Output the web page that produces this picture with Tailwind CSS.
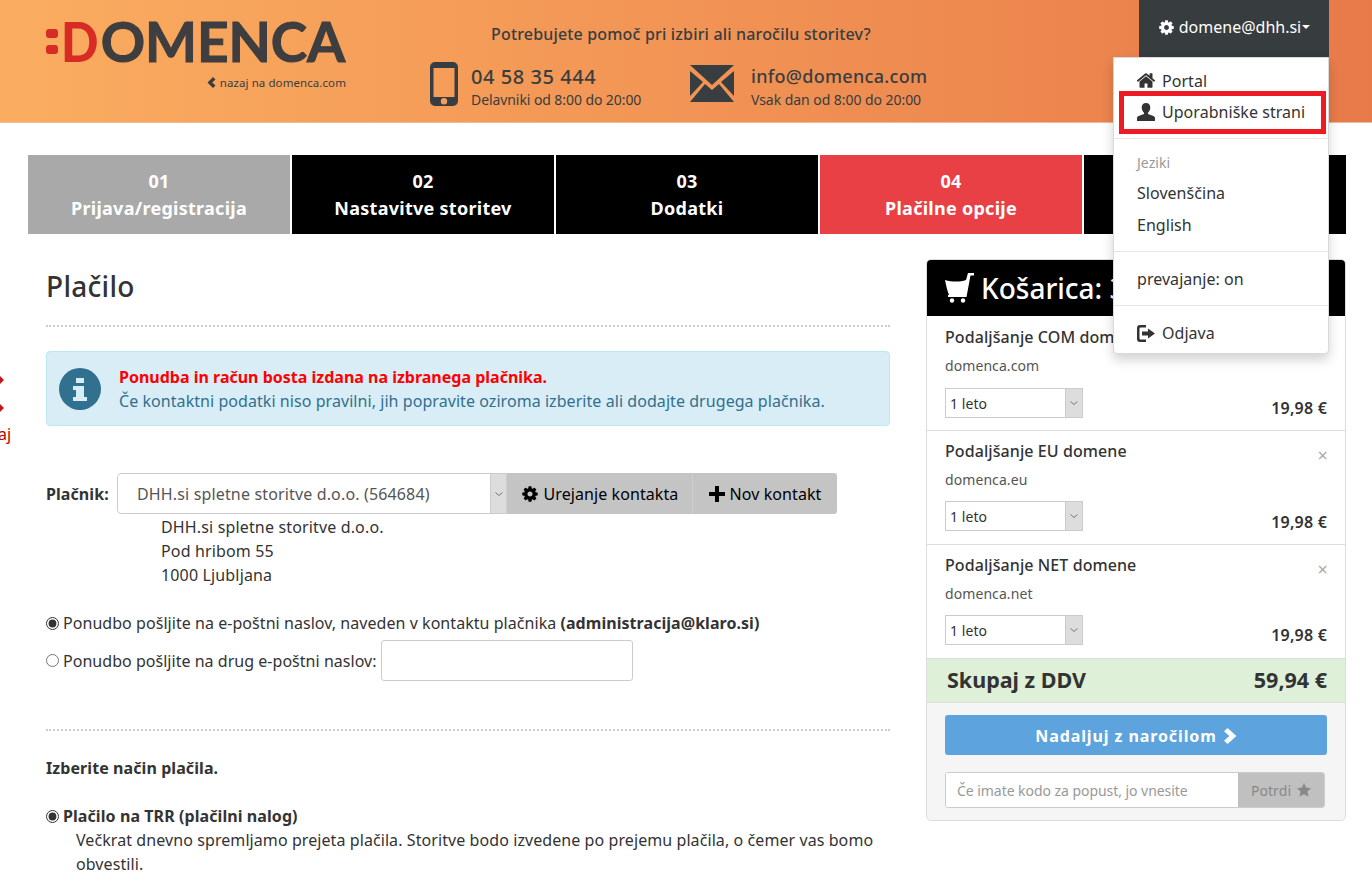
<!DOCTYPE html>
<html lang="sl">
<head>
  <meta charset="UTF-8" />
  <title>Domenca - Plačilo</title>
  <script src="https://cdn.jsdelivr.net/npm/@tailwindcss/browser@4"></script>
</head>
<body class="relative h-[884px] overflow-hidden bg-white font-['Noto_Sans',sans-serif] text-[16px] tracking-[0.08px] text-[#333]">

  <!-- header -->
  <header class="flex h-[123px] border-b border-[#e9bd9b] bg-gradient-to-r from-[#faad60] to-[#e87a49] text-[#373d40]">
    <div class="w-[367px] shrink-0 pl-[46px] pt-[14px]">
      <div class="flex h-[54px] items-center">
        <div class="flex w-[12px] flex-col gap-[7px]">
          <span class="h-[9px] w-[12px] rounded-[3px] bg-[#d92b26]"></span>
          <span class="h-[9px] w-[12px] rounded-[3px] bg-[#d92b26]"></span>
        </div>
        <span class="ml-[3px] -mr-[4px] inline-block origin-left scale-x-[0.88] font-['Lato',sans-serif] text-[56px] leading-none font-black text-[#d92b26]">D</span>
        <span class="ml-[1px] font-['Lato',sans-serif] text-[55px] leading-none font-bold tracking-[-0.1px] text-[#3e3d40] [-webkit-text-stroke:1px_#3e3d40]">OMENCA</span>
      </div>
      <div class="mt-[6px] flex w-[300px] items-center justify-end gap-[4px] text-[11.5px]">
        <svg class="h-[11px] w-[9px]" viewBox="0 0 9 11"><path d="M6 0l2.500 2.500L5.200 5.500l3.300 3L6 11 .5 5.500z" fill="#373d40"/></svg>
        <span>nazaj na domenca.com</span>
      </div>
    </div>

    <div class="w-[620px] shrink-0 pt-[23px]">
      <p class="pl-[124px] text-[16px] leading-[22px] font-medium tracking-[0.17px]">Potrebujete pomoč pri izbiri ali naročilu storitev?</p>
      <div class="mt-[16px] flex">
        <div class="flex w-[323px] items-start gap-[13px] pl-[63px]">
          <svg class="mt-[1px] h-[44px] w-[28px] shrink-0" viewBox="0 0 28 44"><path fill-rule="evenodd" d="M5 0h18a5 5 0 0 1 5 5v34a5 5 0 0 1-5 5H5a5 5 0 0 1-5-5V5a5 5 0 0 1 5-5zM3.500 6v29h21V6zM14 36a3.200 3.200 0 1 0 0 6.400A3.200 3.200 0 0 0 14 36z" fill="#373d40"/></svg>
          <div class="whitespace-nowrap pt-[3px]">
            <div class="text-[20px] leading-[26px] font-medium tracking-[0.55px]">04 58 35 444</div>
            <div class="text-[14px] leading-[20px] tracking-[-0.08px]">Delavniki od 8:00 do 20:00</div>
          </div>
        </div>
        <div class="flex items-start gap-[17px]">
          <svg class="mt-[4px] h-[37px] w-[44px] shrink-0" viewBox="0 0 44 37"><path d="M0 0h44L22 20zM0 6l13 11L0 31zM44 6v25L31 17zM15 19l7 6 7-6 15 18H0z" fill="#373d40"/></svg>
          <div class="whitespace-nowrap pt-[2px]">
            <div class="text-[18px] leading-[26px] font-medium tracking-[0.3px]">info@domenca.com</div>
            <div class="mt-[1px] text-[14px] leading-[20px] tracking-[-0.05px]">Vsak dan od 8:00 do 20:00</div>
          </div>
        </div>
      </div>
    </div>

    <div class="ml-[152px] flex h-[57px] w-[190px] items-center justify-center gap-[4px] bg-[#373c3e] pb-[3px] tracking-normal text-white">
      <svg class="h-[17px] w-[17px]" viewBox="0 0 1792 1792"><path fill="#fff" d="M1152 896q0-106-75-181t-181-75-181 75-75 181 75 181 181 75 181-75 75-181zm512-109v222q0 12-8 23t-20 13l-185 28q-19 54-39 91 35 50 107 138 10 12 10 25t-9 23q-27 37-99 108t-94 71q-12 0-26-9l-138-108q-44 23-91 38-16 136-29 186-7 28-36 28h-222q-14 0-24.500-8.500t-11.500-21.500l-28-184q-49-16-90-37l-141 107q-10 9-25 9-14 0-25-11-126-114-165-168-7-10-7-23 0-12 8-23 15-21 51-66.500t54-70.500q-27-50-41-99l-183-27q-13-2-21-12.500t-8-23.500v-222q0-12 8-23t19-13l186-28q14-46 39-92-40-57-107-138-10-12-10-24 0-10 9-23 26-36 98.500-107.500t94.500-71.500q13 0 26 10l138 107q44-23 91-38 16-136 29-186 7-28 36-28h222q14 0 24.500 8.500t11.500 21.500l28 184q49 16 90 37l142-107q9-9 24-9 13 0 25 10 129 119 165 170 7 8 7 22 0 12-8 23-15 21-51 66.500t-54 70.500q26 50 41 98l183 28q13 2 21 12.500t8 23.500z"/></svg>
      <span>domene@dhh.si</span>
      <span class="-ml-[3px] h-0 w-0 border-x-[4px] border-t-[4px] border-x-transparent border-t-white"></span>
    </div>
  </header>

  <!-- user menu -->
  <div class="absolute left-[1113px] top-[57px] z-10 h-[297px] w-[216px] rounded-b-[4px] border border-[#d9d9d9] bg-white pt-[7px] tracking-[0.04px] shadow-[0_6px_12px_rgba(0,0,0,0.175)]">
    <div class="flex h-[31px] items-center gap-[7px] pl-[23px]">
      <svg class="h-[15px] w-[18px]" viewBox="97 250 1598 1290"><path fill="#333" d="M1472 992v480q0 26-19 45t-45 19h-384v-384h-256v384h-384q-26 0-45-19t-19-45v-480q0-1 .5-3t.5-3l575-474 575 474q1 2 1 6zm223-69l-62 74q-8 9-21 11h-3q-13 0-21-7l-692-577-692 577q-12 8-24 7-13-2-21-11l-62-74q-8-10-7-23.500t11-21.500l719-599q32-26 76-26t76 26l244 204v-195q0-14 9-23t23-9h192q14 0 23 9t9 23v408l219 182q10 8 11 21.500t-7 23.500z"/></svg>
      <span>Portal</span>
    </div>
    <div class="flex h-[32px] items-center gap-[7px] pl-[23px]">
      <svg class="h-[18px] w-[18px]" viewBox="0 0 18 18"><path fill="#333" d="M9 0c2.800 0 4.300 2 4.300 4.500 0 2.200-1 4.200-2.300 5.200v1.300c2.500.8 6.200 1.800 7 3.500V18H0v-3.500c.8-1.700 4.500-2.700 7-3.500V9.700C5.700 8.700 4.700 6.700 4.700 4.500 4.700 2 6.200 0 9 0z"/></svg>
      <span>Uporabniške strani</span>
    </div>
    <div class="mt-[10px] h-px bg-[#e5e5e5]"></div>
    <div class="mt-[12px] pl-[23px] text-[14px] leading-[24px] text-[#999]">Jeziki</div>
    <div class="mt-[2px] pl-[23px] leading-[32px]">Slovenščina</div>
    <div class="pl-[23px] leading-[32px]">English</div>
    <div class="mt-[10px] h-px bg-[#e5e5e5]"></div>
    <div class="mt-[11px] pl-[23px] leading-[32px]">prevajanje: on</div>
    <div class="mt-[10px] h-px bg-[#e5e5e5]"></div>
    <div class="mt-[11px] flex h-[32px] items-center gap-[7px] pl-[23px]">
      <svg class="h-[17px] w-[18px]" viewBox="0 0 18 17"><path fill="#333" d="M3 0h6v2.500H3.500a1 1 0 0 0-1 1v10a1 1 0 0 0 1 1H9V17H3a3 3 0 0 1-3-3V3a3 3 0 0 1 3-3zM11 3.500l7 5-7 5v-3H5v-4h6z"/></svg>
      <span>Odjava</span>
    </div>
    <div class="absolute left-[5px] top-[33px] h-[43px] w-[207px] border-[5px] border-[#ed1c24]"></div>
  </div>

  <!-- cut off annotation at the left edge -->
  <div class="absolute left-0 top-[376px] h-[8px] w-[4px] bg-[#c8141c] [clip-path:polygon(0_0,100%_50%,0_100%)]"></div>
  <div class="absolute left-0 top-[404px] h-[8px] w-[4px] bg-[#c8141c] [clip-path:polygon(0_0,100%_50%,0_100%)]"></div>
  <div class="absolute -left-[2px] top-[423px] text-[16px] leading-[22px] text-[#c00000]">aj</div>

  <!-- steps -->
  <div class="mx-[26px] mt-[32px] ml-[28px] grid grid-cols-5 gap-[2px] text-center text-[18px] leading-[27px] font-bold tracking-[0.27px] text-white">
    <div class="h-[79px] bg-[#a9a9a9] pt-[13px]"><div>01</div><div>Prijava/registracija</div></div>
    <div class="h-[79px] bg-black pt-[13px]"><div>02</div><div>Nastavitve storitev</div></div>
    <div class="h-[79px] bg-black pt-[13px]"><div>03</div><div>Dodatki</div></div>
    <div class="h-[79px] bg-[#e84045] pt-[13px]"><div>04</div><div>Plačilne opcije</div></div>
    <div class="h-[79px] bg-black"></div>
  </div>

  <main class="mt-[25px] flex gap-[36px] pl-[46px]">
    <!-- left column -->
    <section class="w-[844px] shrink-0">
      <h1 class="mt-[7px] text-[28px] leading-[40px] font-medium tracking-[0.3px]">Plačilo</h1>
      <div class="mt-[19px] border-b-2 border-dotted border-[#ccc]"></div>

      <div class="mt-[24px] flex h-[75px] items-center rounded-[4px] border border-[#bce8f1] bg-[#d9edf7] pl-[12px]">
        <svg class="h-[42px] w-[42px] shrink-0" viewBox="0 0 42 42"><circle cx="21" cy="21" r="21" fill="#31708f"/><path fill="#d9edf7" d="M17 10h8v5h-8zM14 18h11v11h3v4H14v-4h3v-7h-3z"/></svg>
        <div class="ml-[18px] leading-[24px]">
          <div class="font-bold tracking-normal text-[#ff0000]">Ponudba in račun bosta izdana na izbranega plačnika.</div>
          <div class="tracking-[0.06px] text-[#31708f]">Če kontaktni podatki niso pravilni, jih popravite oziroma izberite ali dodajte drugega plačnika.</div>
        </div>
      </div>

      <div class="mt-[47px] flex h-[41px] items-center">
        <label class="w-[71px] font-bold">Plačnik:</label>
        <div class="flex h-[41px] w-[390px] rounded-l-[4px] border border-[#ccc] bg-white">
          <select class="min-w-0 flex-1 appearance-none bg-transparent pl-[19px] tracking-[0.15px] text-[#555] outline-none">
            <option>DHH.si spletne storitve d.o.o. (564684)</option>
          </select>
          <div class="flex w-[16px] items-center justify-center border-l border-[#ccc] bg-[#ddd]">
            <svg class="h-[4px] w-[8px]" viewBox="0 0 8 4"><path d="M.5.5L4 3.500 7.500.5" fill="none" stroke="#777" stroke-width="1"/></svg>
          </div>
        </div>
        <button class="flex h-[41px] w-[186px] items-center justify-center gap-[5px] border-r border-[#cfcfcf] bg-[#c4c4c4] text-black">
          <svg class="h-[18px] w-[18px]" viewBox="0 0 1792 1792"><path fill="#000" d="M1152 896q0-106-75-181t-181-75-181 75-75 181 75 181 181 75 181-75 75-181zm512-109v222q0 12-8 23t-20 13l-185 28q-19 54-39 91 35 50 107 138 10 12 10 25t-9 23q-27 37-99 108t-94 71q-12 0-26-9l-138-108q-44 23-91 38-16 136-29 186-7 28-36 28h-222q-14 0-24.500-8.500t-11.500-21.500l-28-184q-49-16-90-37l-141 107q-10 9-25 9-14 0-25-11-126-114-165-168-7-10-7-23 0-12 8-23 15-21 51-66.500t54-70.500q-27-50-41-99l-183-27q-13-2-21-12.500t-8-23.500v-222q0-12 8-23t19-13l186-28q14-46 39-92-40-57-107-138-10-12-10-24 0-10 9-23 26-36 98.500-107.500t94.500-71.500q13 0 26 10l138 107q44-23 91-38 16-136 29-186 7-28 36-28h222q14 0 24.500 8.500t11.500 21.500l28 184q49 16 90 37l142-107q9-9 24-9 13 0 25 10 129 119 165 170 7 8 7 22 0 12-8 23-15 21-51 66.500t-54 70.500q26 50 41 98l183 28q13 2 21 12.500t8 23.500z"/></svg>
          Urejanje kontakta
        </button>
        <button class="flex h-[41px] w-[144px] items-center justify-center gap-[5px] rounded-r-[3px] bg-[#c4c4c4] text-black">
          <svg class="h-[16px] w-[16px]" viewBox="0 0 16 16"><path fill="#000" d="M6 0h4v6h6v4h-6v6H6v-6H0V6h6z"/></svg>
          Nov kontakt
        </button>
      </div>

      <div class="mt-[1px] pl-[115px] leading-[24px] tracking-[0.15px]">
        <div>DHH.si spletne storitve d.o.o.</div>
        <div>Pod hribom 55</div>
        <div>1000 Ljubljana</div>
      </div>

      <label class="mt-[24px] flex h-[24px] items-center gap-[4px]">
        <input type="radio" name="ponudba" checked class="m-0 h-[13px] w-[13px] accent-[#333]" />
        <span class="tracking-[0.05px]">Ponudbo pošljite na e-poštni naslov, naveden v kontaktu plačnika <b class="font-bold">(administracija@klaro.si)</b></span>
      </label>
      <label class="mt-[5px] flex h-[41px] items-center gap-[4px]">
        <input type="radio" name="ponudba" class="m-0 h-[13px] w-[13px] accent-[#333]" />
        <span class="tracking-[0.03px]">Ponudbo pošljite na drug e-poštni naslov:</span>
        <input type="text" class="h-[41px] w-[252px] rounded-[3px] border border-[#ccc] bg-white" />
      </label>

      <div class="mt-[48px] border-b-2 border-dotted border-[#ccc]"></div>
      <p class="mt-[25px] leading-[24px] font-bold">Izberite način plačila.</p>

      <label class="mt-[24px] flex h-[24px] items-center gap-[4px]">
        <input type="radio" name="placilo" checked class="m-0 h-[13px] w-[13px] accent-[#333]" />
        <span class="font-bold">Plačilo na TRR (plačilni nalog)</span>
      </label>
      <p class="pl-[30px] leading-[24px]">Večkrat dnevno spremljamo prejeta plačila. Storitve bodo izvedene po prejemu plačila, o čemer vas bomo obvestili.</p>
    </section>

    <!-- cart -->
    <aside class="h-[562px] w-[420px] shrink-0 overflow-hidden rounded-[5px] border border-[#ddd] bg-[#f5f5f5]">
      <div class="-mt-px flex h-[57px] items-center gap-[7px] bg-black pl-[18px] text-[28px] font-medium tracking-normal text-white">
        <svg class="h-[30px] w-[29px]" viewBox="0 0 29 30"><path fill="#fff" d="M0 7C7 9 15 9 21 7L23 0H29V2.500H25.500L21.500 24H3V22H4C2 17 1 12 0 7z"/><circle cx="7" cy="27.500" r="2.200" fill="#fff"/><circle cx="18" cy="27.500" r="2.200" fill="#fff"/></svg>
        Košarica: 3
      </div>

      <div class="h-[115px] border-b border-[#ddd] bg-white px-[18px]">
        <div class="pt-[9px] leading-[24px] font-medium">Podaljšanje COM domene</div>
        <div class="mt-[5px] text-[14px] leading-[24px] text-[#555]">domenca.com</div>
        <div class="mt-[10px] flex items-end justify-between">
          <div class="flex h-[30px] w-[138px] border border-[#ccc] bg-white">
            <select class="min-w-0 flex-1 appearance-none bg-transparent pl-[4px] text-[14px] text-[#333] outline-none"><option>1 leto</option></select>
            <div class="flex w-[17px] items-center justify-center border-l border-[#ccc] bg-[#ddd]"><svg class="h-[4px] w-[8px]" viewBox="0 0 8 4"><path d="M.5.5L4 3.500 7.500.5" fill="none" stroke="#777"/></svg></div>
          </div>
          <span class="-mb-px text-[16px] leading-[22px] font-semibold tracking-[0.2px]">19,98 €</span>
        </div>
      </div>

      <div class="relative h-[114px] border-b border-[#ddd] bg-white px-[18px]">
        <div class="pt-[8px] leading-[24px] font-medium">Podaljšanje EU domene</div>
        <span class="absolute right-[17px] top-[12px] text-[18px] leading-[24px] text-[#aaa]">×</span>
        <div class="mt-[5px] text-[14px] leading-[24px] text-[#555]">domenca.eu</div>
        <div class="mt-[9px] flex items-end justify-between">
          <div class="flex h-[30px] w-[138px] border border-[#ccc] bg-white">
            <select class="min-w-0 flex-1 appearance-none bg-transparent pl-[4px] text-[14px] text-[#333] outline-none"><option>1 leto</option></select>
            <div class="flex w-[17px] items-center justify-center border-l border-[#ccc] bg-[#ddd]"><svg class="h-[4px] w-[8px]" viewBox="0 0 8 4"><path d="M.5.5L4 3.500 7.500.5" fill="none" stroke="#777"/></svg></div>
          </div>
          <span class="-mb-[2px] text-[16px] leading-[22px] font-semibold tracking-[0.2px]">19,98 €</span>
        </div>
      </div>

      <div class="relative h-[114px] border-b border-[#ddd] bg-white px-[18px]">
        <div class="pt-[8px] leading-[24px] font-medium">Podaljšanje NET domene</div>
        <span class="absolute right-[17px] top-[12px] text-[18px] leading-[24px] text-[#aaa]">×</span>
        <div class="mt-[5px] text-[14px] leading-[24px] text-[#555]">domenca.net</div>
        <div class="mt-[9px] flex items-end justify-between">
          <div class="flex h-[30px] w-[138px] border border-[#ccc] bg-white">
            <select class="min-w-0 flex-1 appearance-none bg-transparent pl-[4px] text-[14px] text-[#333] outline-none"><option>1 leto</option></select>
            <div class="flex w-[17px] items-center justify-center border-l border-[#ccc] bg-[#ddd]"><svg class="h-[4px] w-[8px]" viewBox="0 0 8 4"><path d="M.5.5L4 3.500 7.500.5" fill="none" stroke="#777"/></svg></div>
          </div>
          <span class="-mb-px text-[16px] leading-[22px] font-semibold tracking-[0.2px]">19,98 €</span>
        </div>
      </div>

      <div class="flex h-[44px] items-center justify-between border-b border-[#ddd] bg-[#dff0d8] px-[18px] pl-[20px] text-[21.5px] font-bold tracking-normal">
        <span>Skupaj z DDV</span><span>59,94 €</span>
      </div>

      <div class="px-[18px] pt-[12px]">
        <button class="flex h-[40px] w-full items-center justify-center gap-[7px] rounded-[3px] bg-[#5da4de] pt-px text-[16px] font-bold tracking-[0.9px] text-white">
          Nadaljuj z naročilom
          <svg class="h-[16px] w-[13px]" viewBox="0 0 11 15" preserveAspectRatio="none"><path fill="#fff" d="M3 0l7.500 7.500L3 15 0 12l4.500-4.500L0 3z"/></svg>
        </button>
        <div class="mt-[17px] flex h-[36px] w-[380px] overflow-hidden rounded-[3px] border border-[#ccc]">
          <input type="text" placeholder="Če imate kodo za popust, jo vnesite" class="min-w-0 flex-1 bg-white pl-[11px] text-[14px] tracking-[-0.05px] placeholder:text-[#999]" />
          <button class="flex w-[86px] items-center justify-center gap-[6px] bg-[#c0c0c0] text-[14px] text-[#888]">
            Potrdi
            <svg class="h-[14px] w-[14px]" viewBox="0 0 20 20"><path fill="#888" d="M10 0l3 6.500 7 .9-5.100 4.900 1.300 7.100L10 16l-6.200 3.400 1.300-7.100L0 7.400l7-.9z"/></svg>
          </button>
        </div>
      </div>
    </aside>
  </main>
</body>
</html>
